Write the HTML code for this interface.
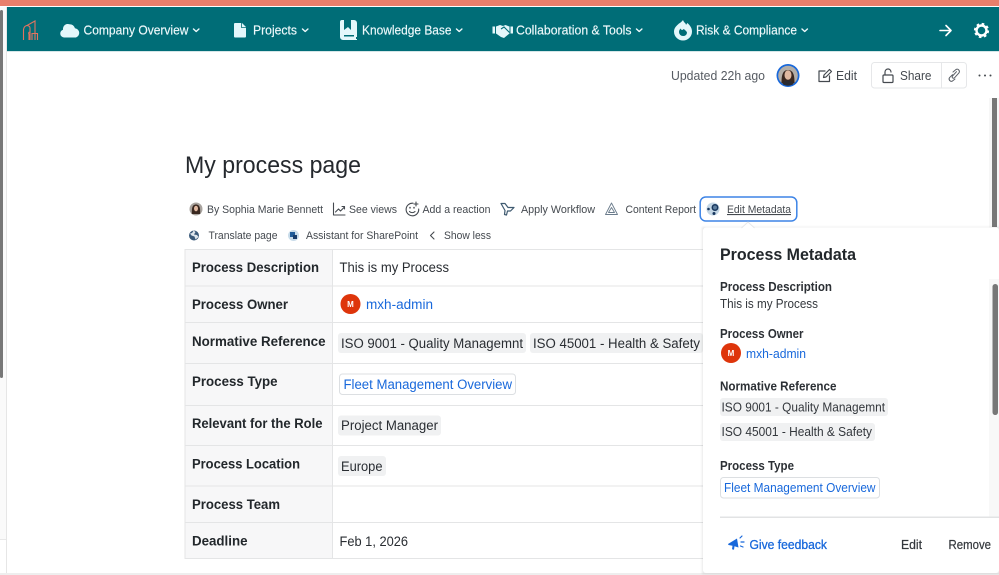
<!DOCTYPE html>
<html><head><meta charset="utf-8"><title>My process page</title>
<style>
html,body{margin:0;padding:0;background:#fff;width:999px;height:575px;overflow:hidden}
svg{display:block;font-family:"Liberation Sans",sans-serif}
.n{font-size:13px;fill:#eef9fb;stroke:#eef9fb;stroke-width:.15}
.m{font-size:11px;fill:#44494f}
.l{font-size:13.5px;font-weight:700;fill:#22272b}
.v{font-size:13.5px;fill:#292d32}
.h{font-size:12.5px;font-weight:700;fill:#2c3035}
.p{font-size:12.500px;fill:#33373c}
.b{fill:#1868db}
.g{fill:#f0f1f2}
</style></head><body>
<svg width="999" height="575" viewBox="0 0 999 575" xmlns="http://www.w3.org/2000/svg">
<rect width="999" height="575" fill="#fff"/>
<!-- left strip -->
<rect x="0" y="7" width="6" height="568" fill="#fafafa"/>
<rect x="0" y="539" width="6" height="36" fill="#fff"/>
<rect x="0" y="539" width="6" height="1" fill="#e8e8e8"/>
<rect x="6" y="7" width="1" height="568" fill="#e6e6e6"/>
<rect x="0" y="10" width="3" height="368" rx="1.500" fill="#777"/>
<rect x="0" y="573" width="999" height="2" fill="#eeeeee"/>
<!-- top -->
<rect width="999" height="6" fill="#e97f6c"/>
<rect x="7" y="7" width="992" height="44" fill="#006d77"/>
<rect x="7" y="51" width="992" height="1" fill="#d5e6e8"/>
<!-- logo -->
<g fill="none" stroke="#e2735f" stroke-width="1.100"><path d="M23.500 40V29.500Q24 26 27 25.500L35 21V40M30 40V28Q30 25.500 26 25.500M32 40V33.500H37.500V40M29 40V34.500Q28 32 30 32"/></g>
<!-- nav icons -->
<path d="M64 37.500a4 4 0 0 1-1-7.800 5 5 0 0 1 6.500-5.500 6 6 0 0 1 5.500 4 4.800 4.800 0 0 1 1 9.300z" fill="#e4f7fb"/>
<path d="M235 23h7l4 4v9.500a1 1 0 0 1-1 1h-10a1 1 0 0 1-1-1V24a1 1 0 0 1 1-1z" fill="#e4f7fb"/><path d="M241.500 23v4.500h4.500" fill="none" stroke="#006d77" stroke-width=".8"/>
<path d="M340 22a2 2 0 0 1 2-2h2v10l4-3 3 3V20h3a3 3 0 0 1 3 3v14h-1v2h1v1h-14a3 3 0 0 1-3-3z" fill="#e4f7fb"/><rect x="344" y="35" width="10" height="1.500" fill="#006d77"/>
<path d="M492.500 26.500h2.500v7h-2.500zM510.500 26.500h2.500v7h-2.500z" fill="#e4f7fb"/><path d="M496 26.500l4-1.500 3 1 2.500-1 4 1.500v7l-5.500 4.500-3-1-5-3.500z" fill="#e4f7fb"/><path d="M501 29l3-2 5.500 5.500" fill="none" stroke="#006d77" stroke-width="1.100"/>
<path d="M683 20c1 3 3 3 3 5 .5-1 1-1.500 1.500-2 2.500 2.500 4.500 5 4.500 8.500a9 9 0 0 1-18 0c0-4 3-6 5-8 1-.5 3-2 4-3.500z" fill="#e4f7fb"/><path d="M683 36a4 4 0 0 1-4-4c0-1.500.7-2.500 1.500-3.500.3 1 1 1.500 2 1.500 1-1 1-1 2-.5.200.8 2.500 1.500 2.500 3.500a4 4 0 0 1-4 3z" fill="#006d77"/>
<text class="n" x="83.500" y="34.500" textLength="105" lengthAdjust="spacingAndGlyphs">Company Overview</text>
<text class="n" x="253" y="34.500" textLength="44" lengthAdjust="spacingAndGlyphs">Projects</text>
<text class="n" x="362" y="34.500" textLength="89.500" lengthAdjust="spacingAndGlyphs">Knowledge Base</text>
<text class="n" x="516" y="34.500" textLength="115.500" lengthAdjust="spacingAndGlyphs">Collaboration &amp; Tools</text>
<text class="n" x="696" y="34.500" textLength="101" lengthAdjust="spacingAndGlyphs">Risk &amp; Compliance</text>
<g fill="none" stroke="#eef9fb" stroke-width="1.400" stroke-linecap="round" stroke-linejoin="round">
<path d="M193.500 29l2.700 2.500L198.900 29M302.500 29l2.700 2.500L307.900 29M456.500 29l2.700 2.500L461.900 29M636.500 29l2.700 2.500L641.900 29M802 29l2.700 2.500L807.400 29"/>
</g>
<g fill="none" stroke="#fff" stroke-width="1.600" stroke-linecap="round" stroke-linejoin="round"><path d="M940 30.500h10.500M946 25.500l5 5-5 5"/></g>
<circle cx="981.500" cy="30.500" r="5" fill="none" stroke="#fff" stroke-width="2.400"/>
<circle cx="981.500" cy="30.500" r="6.600" fill="none" stroke="#fff" stroke-width="2" stroke-dasharray="2.600 2.580"/>
<!-- header -->
<text x="671" y="80" font-size="13" fill="#565b62" textLength="94" lengthAdjust="spacingAndGlyphs">Updated 22h ago</text>
<circle cx="788" cy="75.500" r="11.500" fill="#1868db"/><circle cx="788" cy="75.500" r="9.800" fill="#b3aea8"/>
<path d="M781.500 83c0-6 .5-13 6.500-13s6.500 7 6.500 13l-2.500.5h-8z" fill="#3a2820"/><ellipse cx="788" cy="75" rx="3.500" ry="4.800" fill="#e0b8a0"/><path d="M782.500 84c1-3 3-3.500 5.500-3.500s4.500.5 5.500 3.500a9.800 9.800 0 0 1-11 0z" fill="#2a2a30"/>
<g fill="none" stroke="#44494f" stroke-width="1.200" stroke-linecap="round" stroke-linejoin="round"><path d="M825 71h-6v10.500h10.500V76M823.500 77.500l.5-2.500 5.500-5.500 2 2-5.500 5.500z"/></g>
<text x="836" y="80" font-size="13" fill="#44494f" textLength="21" lengthAdjust="spacingAndGlyphs">Edit</text>
<rect x="871.500" y="62.500" width="95" height="25.500" rx="3" fill="#fff" stroke="#e6e7e9"/><path d="M941.500 63v25" stroke="#e6e7e9"/>
<g fill="none" stroke="#44494f" stroke-width="1.200" stroke-linecap="round"><rect x="883" y="75" width="10" height="7.500" rx="1"/><path d="M885 75v-3a3 3 0 0 1 6 0"/></g>
<text x="900" y="80" font-size="13" fill="#44494f" textLength="31.500" lengthAdjust="spacingAndGlyphs">Share</text>
<g fill="none" stroke="#5a5f66" stroke-width="1" stroke-linecap="round"><path d="M953 72l3-2.500a2.300 2.300 0 0 1 3 3.300l-4.500 5a1.300 1.300 0 0 1-2-1.800l4-4.300M955 79l-2.500 2a2.300 2.300 0 0 1-3-3.300l3-3"/></g>
<g fill="#44494f"><circle cx="979.500" cy="75.500" r="1"/><circle cx="985" cy="75.500" r="1"/><circle cx="990.500" cy="75.500" r="1"/></g>
<!-- main scrollbar -->
<rect x="989" y="98" width="10" height="130" fill="#f7f7f7"/><rect x="992" y="98" width="5" height="129" fill="#777"/>
<!-- title -->
<text x="185" y="173" font-size="24" fill="#25292e" textLength="176" lengthAdjust="spacingAndGlyphs">My process page</text>
<!-- meta -->
<circle cx="196" cy="209" r="6.500" fill="#a8a39e"/><path d="M191.800 214c0-5 0-9.500 4.200-9.500s4.200 4.500 4.200 9.500z" fill="#3a2820"/><ellipse cx="196" cy="208.500" rx="2" ry="2.800" fill="#e0b8a0"/>
<text class="m" x="207" y="213" textLength="116" lengthAdjust="spacingAndGlyphs">By Sophia Marie Bennett</text>
<g fill="none" stroke="#44494f" stroke-width="1.100" stroke-linecap="round" stroke-linejoin="round"><path d="M333.500 203v12h11.500M335.500 212l3-3 2 2 4-4M342 206.500h2.500V209"/></g>
<text class="m" x="349" y="213" textLength="48" lengthAdjust="spacingAndGlyphs">See views</text>
<g fill="none" stroke="#44494f" stroke-width="1.100" stroke-linecap="round"><path d="M413 203.200a6.300 6.300 0 1 0 5.700 5.800M409.500 211.500c1.500 1.500 4 1.500 5.500 0M416 202v4M414 204h4"/><path d="M410 207.500v.4M414 207.500v.4" stroke-width="1.500"/></g>
<text class="m" x="422.500" y="213" textLength="68" lengthAdjust="spacingAndGlyphs">Add a reaction</text>
<g fill="none" stroke="#3f5a70" stroke-width="1.200" stroke-linejoin="round"><path d="M501 203.500h4l3 4h6l-3.500 3.500h-3l-1 4-2-.5 .5-4-4-7z"/></g>
<text class="m" x="521" y="213" textLength="74" lengthAdjust="spacingAndGlyphs">Apply Workflow</text>
<g fill="none" stroke="#6b7c8c" stroke-width=".9" stroke-linejoin="round"><path d="M611.500 203l6 11.500h-12zM611.500 207.500l3 5h-6z"/></g>
<text class="m" x="625.500" y="213" textLength="70.500" lengthAdjust="spacingAndGlyphs">Content Report</text>
<rect x="700.200" y="197" width="96.600" height="24" rx="5.500" fill="#fff" stroke="#3d84e6" stroke-width="1.500"/>
<circle cx="713" cy="209" r="6.500" fill="#c3d6e5"/><circle cx="715" cy="207.500" r="2.700" fill="#5d7fa0" stroke="#17365d" stroke-width="1.500"/><circle cx="708.500" cy="209" r="1.300" fill="#17365d"/><circle cx="714" cy="213.500" r="1.500" fill="#17365d"/>
<text class="m" x="727" y="213" textLength="64" lengthAdjust="spacingAndGlyphs" text-decoration="underline">Edit Metadata</text>
<circle cx="194" cy="235.500" r="5" fill="#3b5a7a"/><path d="M190 233.500c2 0 3-1.500 3.500-3l2 1.500-1.500 2.500 3 .5 1.500 2-3 2.500-1-3-3-1z" fill="#dfe6ed"/>
<text class="m" x="208.500" y="239" textLength="69" lengthAdjust="spacingAndGlyphs">Translate page</text>
<circle cx="293.500" cy="235.500" r="5.500" fill="#c9dcea"/><rect x="290" y="232" width="5" height="5" fill="#1f5c9a"/><rect x="293" y="235" width="4" height="4" fill="#173c6b"/>
<text class="m" x="306" y="239" textLength="112" lengthAdjust="spacingAndGlyphs">Assistant for SharePoint</text>
<path d="M434 232l-3.500 3.500 3.500 3.500" fill="none" stroke="#44494f" stroke-width="1.100" stroke-linecap="round" stroke-linejoin="round"/>
<text class="m" x="444" y="239" textLength="47" lengthAdjust="spacingAndGlyphs">Show less</text>
<!-- table -->
<rect x="185" y="249" width="147.500" height="309" fill="#f7f7f8"/>
<g stroke="#e4e5e6" stroke-width="1" fill="none">
<path d="M185 249.500h518M185 286h518M185 322.500h518M185 363.500h518M185 405.500h518M185 445.500h518M185 486h518M185 522.500h518M185 558.500h518"/>
<path d="M185 249v310M332.500 249v310"/>
</g>
<text class="l" x="192" y="272" textLength="127" lengthAdjust="spacingAndGlyphs">Process Description</text>
<text class="l" x="192" y="309" textLength="96" lengthAdjust="spacingAndGlyphs">Process Owner</text>
<text class="l" x="192" y="346" textLength="133.500" lengthAdjust="spacingAndGlyphs">Normative Reference</text>
<text class="l" x="192" y="386" textLength="85.500" lengthAdjust="spacingAndGlyphs">Process Type</text>
<text class="l" x="192" y="428" textLength="130.500" lengthAdjust="spacingAndGlyphs">Relevant for the Role</text>
<text class="l" x="192" y="468.500" textLength="108" lengthAdjust="spacingAndGlyphs">Process Location</text>
<text class="l" x="192" y="509" textLength="88" lengthAdjust="spacingAndGlyphs">Process Team</text>
<text class="l" x="192" y="545.500" textLength="55.500" lengthAdjust="spacingAndGlyphs">Deadline</text>
<text class="v" x="339.500" y="272" textLength="109.500" lengthAdjust="spacingAndGlyphs">This is my Process</text>
<circle cx="350.500" cy="304" r="10" fill="#de350b"/><text x="350.500" y="307" font-size="8" font-weight="700" fill="#fff" text-anchor="middle">M</text>
<text class="v b" x="366" y="309" textLength="67" lengthAdjust="spacingAndGlyphs">mxh-admin</text>
<rect class="g" x="338" y="333" width="188" height="20" rx="3"/>
<text class="v" x="341" y="348" textLength="182" lengthAdjust="spacingAndGlyphs">ISO 9001 - Quality Managemnt</text>
<rect class="g" x="530" y="333" width="173" height="20" rx="3"/>
<text class="v" x="533" y="348" textLength="167" lengthAdjust="spacingAndGlyphs">ISO 45001 - Health &amp; Safety</text>
<rect x="339.500" y="374" width="176" height="20.500" rx="3" fill="#fff" stroke="#dcdfe2"/>
<text class="v b" x="343.500" y="389" textLength="168.500" lengthAdjust="spacingAndGlyphs">Fleet Management Overview</text>
<rect class="g" x="338" y="415.500" width="103" height="20" rx="3"/>
<text class="v" x="341" y="430" textLength="97" lengthAdjust="spacingAndGlyphs">Project Manager</text>
<rect class="g" x="338" y="456" width="48" height="20" rx="3"/>
<text class="v" x="341" y="471" textLength="41.500" lengthAdjust="spacingAndGlyphs">Europe</text>
<text class="v" x="339.500" y="546" textLength="68.500" lengthAdjust="spacingAndGlyphs">Feb 1, 2026</text>
<!-- popup -->
<defs><filter id="s" x="-10%" y="-10%" width="120%" height="120%"><feGaussianBlur stdDeviation="1"/></filter></defs>
<rect x="702" y="227" width="310" height="347" fill="#000" opacity=".09" filter="url(#s)"/>
<rect x="703" y="227.500" width="296" height="345.500" rx="3" fill="#fff"/>
<path d="M741.500 228l6.500-6 6.500 6" fill="#fff" stroke="#e6e7e9"/><rect x="742" y="228" width="12" height="2" fill="#fff"/>
<rect x="989" y="279" width="10" height="238" fill="#f8f8f8"/>
<rect x="992.500" y="284" width="5.500" height="131" rx="2.700" fill="#777"/>
<text x="720" y="260" font-size="16.500" font-weight="700" fill="#22272b" textLength="136" lengthAdjust="spacingAndGlyphs">Process Metadata</text>
<text class="h" x="720" y="291" textLength="112" lengthAdjust="spacingAndGlyphs">Process Description</text>
<text class="p" x="720" y="308" textLength="98" lengthAdjust="spacingAndGlyphs">This is my Process</text>
<text class="h" x="720" y="338" textLength="83.500" lengthAdjust="spacingAndGlyphs">Process Owner</text>
<circle cx="731" cy="353" r="10" fill="#de350b"/><text x="731" y="356" font-size="8" font-weight="700" fill="#fff" text-anchor="middle">M</text>
<text class="p b" x="746" y="358" textLength="60" lengthAdjust="spacingAndGlyphs">mxh-admin</text>
<text class="h" x="720" y="390.500" textLength="116.500" lengthAdjust="spacingAndGlyphs">Normative Reference</text>
<rect class="g" x="720" y="398" width="168" height="18" rx="3"/>
<text class="p" x="721.500" y="411.500" textLength="163.500" lengthAdjust="spacingAndGlyphs">ISO 9001 - Quality Managemnt</text>
<rect class="g" x="720" y="423" width="155" height="18" rx="3"/>
<text class="p" x="721.500" y="436" textLength="150.500" lengthAdjust="spacingAndGlyphs">ISO 45001 - Health &amp; Safety</text>
<text class="h" x="720" y="470" textLength="74" lengthAdjust="spacingAndGlyphs">Process Type</text>
<rect x="720.500" y="477.500" width="159" height="20.500" rx="3" fill="#fff" stroke="#dcdfe2"/>
<text class="p b" x="724" y="492" textLength="151.500" lengthAdjust="spacingAndGlyphs">Fleet Management Overview</text>
<rect x="720" y="516.500" width="279" height="1.500" fill="#e2e3e4"/>
<path d="M728 544l9-5.500 1.500 9-4-1.200-.5 3.500-2-.5.500-3.500-4-.8z" fill="#1868db"/><path d="M740 538l2-2M741 542h3M740.500 546l2.500 1" stroke="#1868db" stroke-width="1.200" fill="none" stroke-linecap="round"/>
<text x="749.500" y="549" font-size="12.500" fill="#1868db" stroke="#1868db" stroke-width=".3" textLength="77.500" lengthAdjust="spacingAndGlyphs">Give feedback</text>
<text x="901" y="549" font-size="12.500" fill="#33373c" stroke="#33373c" stroke-width=".2" textLength="21" lengthAdjust="spacingAndGlyphs">Edit</text>
<text x="948.500" y="549" font-size="12.500" fill="#33373c" stroke="#33373c" stroke-width=".2" textLength="42.500" lengthAdjust="spacingAndGlyphs">Remove</text>
</svg>
</body></html>
